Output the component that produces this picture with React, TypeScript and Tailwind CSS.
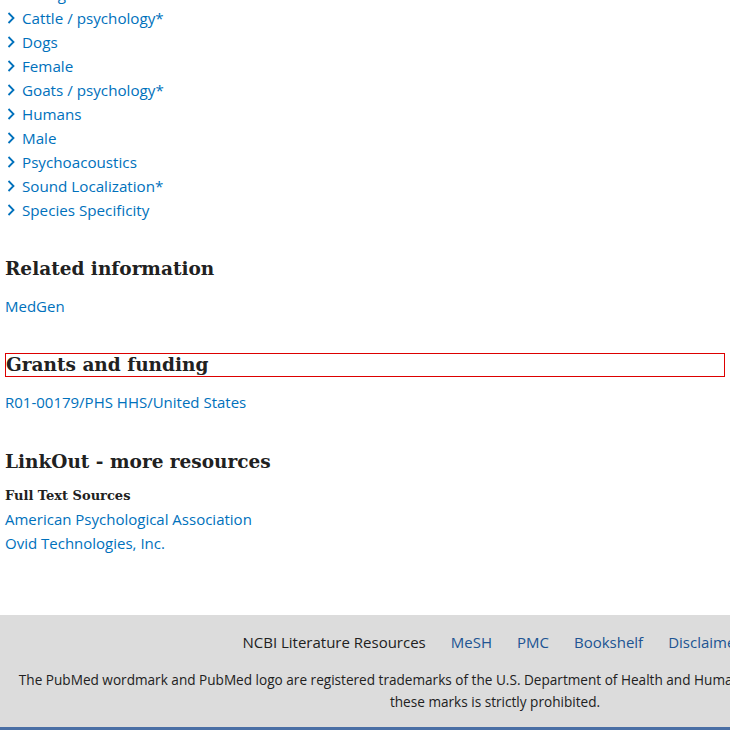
import React from "react";

const sans = "font-['Segoe_UI','Open_Sans','Noto_Sans',sans-serif]";
const serif = "font-['DejaVu_Serif','Liberation_Serif',serif]";

const terms = [
  "Biological Evolution",
  "Cattle / psychology*",
  "Dogs",
  "Female",
  "Goats / psychology*",
  "Humans",
  "Male",
  "Psychoacoustics",
  "Sound Localization*",
  "Species Specificity",
];

function Chevron() {
  return (
    <svg width="10" height="14" viewBox="0 0 10 14" className="shrink-0">
      <path d="M2.5 2 L7.5 7 L2.5 12" fill="none" stroke="#0071bc" strokeWidth="1.8" />
    </svg>
  );
}

export default function App() {
  return (
    <div className={`w-[730px] h-[730px] overflow-hidden bg-white ${sans}`}>
      <div className="px-[5px]">
        <ul className="mt-[-18px]">
          {terms.map((t) => (
            <li key={t} className="h-6 flex items-center gap-[6px] pl-[1px]">
              <Chevron />
              <span className="text-[15.2px] text-[#0071bc] leading-6">{t}</span>
            </li>
          ))}
        </ul>
        <h2 className={`${serif} mt-[32px] text-[18.5px] font-bold leading-[30px] text-[#212121]`}>
          Related information
        </h2>
        <div className="mt-[10px] h-6 leading-6 text-[15px] text-[#0071bc]">MedGen</div>
        <h2
          className={`${serif} mt-[35px] h-6 w-[720px] border border-[#dd0000] text-[18.5px] font-bold leading-[22px] text-[#212121]`}
        >
          Grants and funding
        </h2>
        <div className="mt-[13px] h-6 leading-6 text-[15px] text-[#0071bc]">
          R01-00179/PHS HHS/United States
        </div>
        <h2 className={`${serif} mt-[33px] text-[18.5px] font-bold leading-[30px] text-[#212121]`}>
          LinkOut - more resources
        </h2>
        <div className={`${serif} mt-[7px] h-6 leading-6 text-[13px] font-bold text-[#212121]`}>
          Full Text Sources
        </div>
        <div className="mt-[-1px] h-6 leading-6 text-[15px] text-[#0071bc]">
          American Psychological Association
        </div>
        <div className="h-6 leading-6 text-[15px] text-[#0071bc]">Ovid Technologies, Inc.</div>
      </div>
      <footer className="mt-[60px] w-[990px] bg-[#dcdcdc]">
        <div className="h-[112px] flex flex-col items-center">
          <div className="mt-[16px] h-[22px] flex items-center gap-[25px] text-[15px] -translate-x-[3px]">
            <span className="text-[#212121]">NCBI Literature Resources</span>
            <span className="text-[#205493]">MeSH</span>
            <span className="text-[#205493]">PMC</span>
            <span className="text-[#205493]">Bookshelf</span>
            <span className="text-[#205493]">Disclaimer</span>
          </div>
          <p className="mt-[16px] w-[960px] text-center text-[13.6px] leading-[22px] text-[#212121]">
            The PubMed wordmark and PubMed logo are registered trademarks of the U.S. Department of Health and Human
            Services (HHS). Unauthorized use of these marks is strictly prohibited.
          </p>
        </div>
        <div className="h-[10px] bg-[#4a6fa5]" />
      </footer>
    </div>
  );
}
